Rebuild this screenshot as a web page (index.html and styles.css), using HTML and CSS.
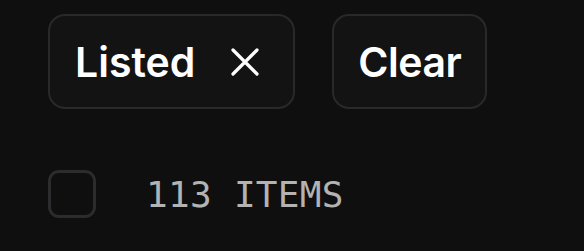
FILE: index.html
```html
<!DOCTYPE html>
<html lang="en">
<head>
    <meta charset="UTF-8">
    <meta name="viewport" content="width=device-width, initial-scale=1.0">
    <title>Filters</title>
    <link rel="stylesheet" href="styles.css">
</head>
<body>
    <div class="container">
        <div class="filter-bar">
            <button class="chip">
                <span>Listed</span>
                <svg class="chip-close" width="28" height="28" viewBox="0 0 28 28" aria-hidden="true">
                    <path d="M2 2 L26 26 M26 2 L2 26" stroke="#fff" stroke-width="3.2" stroke-linecap="round"/>
                </svg>
            </button>
            <button class="chip">Clear</button>
        </div>

        <div class="results">
            <label class="checkbox"><input type="checkbox"></label>
            <span class="count">113 ITEMS</span>
        </div>
    </div>
</body>
</html>
```

FILE: styles.css
```css
:root {
    --bg-color: #0f0f0f;
    --chip-bg: #131313;
    --border-color: #29292b;
    --text-color: #ffffff;
    --muted-color: #b3b3b3;
}

* {
    box-sizing: border-box;
    margin: 0;
    padding: 0;
}

body {
    background-color: var(--bg-color);
    font-family: Inter, 'Noto Sans', sans-serif;
    color: var(--text-color);
}

.container {
    padding: 14px 48px;
}

.filter-bar {
    display: flex;
    gap: 37px;
}

.chip {
    display: flex;
    align-items: center;
    gap: 36px;
    height: 95px;
    padding: 0 34px 0 25px;
    background-color: var(--chip-bg);
    border: 2px solid var(--border-color);
    border-radius: 17px;
    color: var(--text-color);
    font-family: inherit;
    font-size: 41px;
    font-weight: 600;
    cursor: pointer;
}

.chip:last-child {
    padding: 0 24px;
    letter-spacing: -0.5px;
}

.chip-close {
    display: block;
}

.results {
    display: flex;
    align-items: center;
    gap: 50px;
    margin-top: 61px;
}

.checkbox {
    display: block;
    width: 48px;
    height: 48px;
    border: 3px solid #2c2c2f;
    border-radius: 11px;
    background-color: var(--bg-color);
}

.checkbox input {
    display: none;
}

.count {
    font-family: 'DejaVu Sans Mono', 'Liberation Mono', monospace;
    font-size: 36px;
    color: var(--muted-color);
    letter-spacing: 0.3px;
}
```
